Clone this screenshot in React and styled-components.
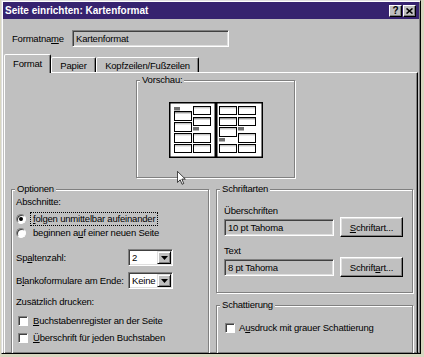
import React from 'react';
import styled, { createGlobalStyle } from 'styled-components';

const Global = createGlobalStyle`
	html, body {
		margin: 0;
		padding: 0;
		background: #d8d6c0;
	}
	body {
		font-family: "Liberation Sans", Arial, sans-serif;
		font-size: 9.5px;
		letter-spacing: -0.2px;
		color: #000;
	}
`;

const Window = styled.div`
	position: relative;
	box-sizing: border-box;
	width: 420px;
	height: 354px;
	margin-left: 1px;
	padding: 1px;
	display: flex;
	flex-direction: column;
	background: #c0c0c0;
	border: 1px solid;
	border-color: #dfdfdf #000 #000 #dfdfdf;
	box-shadow: inset 1px 1px 0 #fff, inset -1px -1px 0 #808080;
	overflow: hidden;
`;

const TitleBar = styled.div`
	flex-shrink: 0;
	height: 17px;
	display: flex;
	align-items: center;
	justify-content: space-between;
	padding: 0 3px 0 2px;
	background: #36236f;
`;

const TitleText = styled.span`
	color: #fff;
	font-weight: bold;
	font-size: 10px;
	letter-spacing: 0;
`;

const CaptionButtons = styled.div`
	display: flex;
	gap: 1px;
`;

const CaptionButton = styled.div`
	box-sizing: border-box;
	width: 13px;
	height: 12px;
	display: flex;
	align-items: center;
	justify-content: center;
	background: #c0c0c0;
	border: 1px solid;
	border-color: #fff #000 #000 #fff;
	box-shadow: inset -1px -1px 0 #808080;
	font-weight: bold;
	font-size: 10px;
	line-height: 1;
	letter-spacing: 0;
`;

const NameRow = styled.div`
	display: flex;
	align-items: center;
	margin-top: 11px;
	padding-left: 9px;
`;

const Label = styled.span`
	display: inline-block;
	width: ${(p) => p.$width || 'auto'};
	line-height: 12px;
	white-space: nowrap;
`;

const Field = styled.div`
	box-sizing: border-box;
	width: ${(p) => p.$width}px;
	height: ${(p) => p.$height || 17}px;
	padding-left: 3px;
	display: flex;
	align-items: center;
	background: ${(p) => (p.$white ? '#fff' : '#c0c0c0')};
	border: 1px solid;
	border-color: #808080 #fff #fff #808080;
	box-shadow: inset 1px 1px 0 #404040, inset -1px -1px 0 #dfdfdf;
	white-space: nowrap;
`;

const TabStrip = styled.div`
	display: flex;
	align-items: flex-end;
	height: 18px;
	margin-top: 7px;
	padding-left: 1px;
	flex-shrink: 0;
`;

const Tab = styled.div`
	position: relative;
	z-index: ${(p) => (p.$active ? 2 : 1)};
	box-sizing: border-box;
	width: ${(p) => p.$width}px;
	height: ${(p) => (p.$active ? 19 : 15)}px;
	margin-bottom: ${(p) => (p.$active ? -1 : 0)}px;
	display: flex;
	align-items: ${(p) => (p.$active ? 'flex-start' : 'center')};
	padding-top: ${(p) => (p.$active ? 3 : 0)}px;
	justify-content: center;
	background: #c0c0c0;
	border: 1px solid;
	border-bottom: none;
	border-color: #fff #000 transparent #fff;
	border-radius: 2px 2px 0 0;
	box-shadow: inset -1px 0 0 #808080;
	white-space: nowrap;
`;

const Panel = styled.div`
	flex-shrink: 0;
	height: 300px;
	margin: 0 1px;
	padding-top: 1px;
	box-sizing: border-box;
	border: 1px solid;
	border-color: #fff #000 #000 #fff;
	box-shadow: inset -1px -1px 0 #808080;
`;

const GroupBox = styled.fieldset`
	box-sizing: border-box;
	min-inline-size: 0;
	margin: ${(p) => p.$margin || '0'};
	padding: 0;
	width: ${(p) => p.$width}px;
	height: ${(p) => (p.$height ? `${p.$height}px` : 'auto')};
	border: 1px solid #808080;
	box-shadow: 1px 1px 0 #fff, inset 1px 1px 0 #fff;
`;

const Legend = styled.legend`
	margin-left: 3px;
	padding: 0 2px;
	line-height: 12px;
	background: #c0c0c0;
`;

const GroupBody = styled.div`
	display: flex;
	flex-direction: column;
	align-items: ${(p) => (p.$center ? 'center' : 'flex-start')};
	justify-content: ${(p) => (p.$center ? 'center' : 'flex-start')};
	padding: ${(p) => p.$padding};
	height: ${(p) => (p.$center ? '100%' : 'auto')};
	box-sizing: border-box;
`;

const Columns = styled.div`
	display: flex;
	align-items: flex-start;
	gap: 7px;
	margin: 5px 0 0 6px;
`;

const Stack = styled.div`
	display: flex;
	flex-direction: column;
`;

const Line = styled.div`
	line-height: 12px;
	margin-top: ${(p) => p.$top || 0}px;
	white-space: nowrap;
`;

const OptionRow = styled.div`
	display: flex;
	align-items: center;
	height: 14px;
	margin-top: ${(p) => p.$top || 0}px;
	padding-left: ${(p) => p.$indent || 0}px;
	gap: ${(p) => p.$gap || 4}px;
	white-space: nowrap;
`;

const Radio = styled.span`
	position: relative;
	box-sizing: border-box;
	width: 10px;
	height: 10px;
	border-radius: 50%;
	background: #fff;
	border: 1px solid;
	border-color: #808080 #fff #fff #808080;
	box-shadow: inset 1px 1px 0 #404040;
	&::after {
		content: '';
		display: ${(p) => (p.$checked ? 'block' : 'none')};
		position: absolute;
		left: 2px;
		top: 2px;
		width: 4px;
		height: 4px;
		border-radius: 50%;
		background: #000;
	}
`;

const Check = styled.span`
	box-sizing: border-box;
	width: 10px;
	height: 10px;
	flex-shrink: 0;
	background: #fff;
	border: 1px solid;
	border-color: #808080 #fff #fff #808080;
	box-shadow: inset 1px 1px 0 #404040;
`;

const OptionText = styled.span`
	padding: 0 2px;
	line-height: 12px;
	border: 1px dotted ${(p) => (p.$focus ? '#000' : 'transparent')};
`;

const ControlRow = styled.div`
	display: flex;
	align-items: center;
	gap: ${(p) => p.$gap || 0}px;
	height: ${(p) => p.$height}px;
	margin-top: ${(p) => p.$top || 0}px;
`;

const Combo = styled(Field)`
	justify-content: space-between;
	padding-right: 1px;
`;

const DropButton = styled.span`
	box-sizing: border-box;
	width: 14px;
	height: ${(p) => p.$height}px;
	display: flex;
	align-items: center;
	justify-content: center;
	background: #c0c0c0;
	border: 1px solid;
	border-color: #dfdfdf #000 #000 #dfdfdf;
	box-shadow: inset 1px 1px 0 #fff, inset -1px -1px 0 #808080;
`;

const PushButton = styled.div`
	box-sizing: border-box;
	width: 63px;
	height: 20px;
	display: flex;
	align-items: center;
	justify-content: center;
	background: #c0c0c0;
	border: 1px solid;
	border-color: #fff #000 #000 #fff;
	box-shadow: inset -1px -1px 0 #808080, inset 1px 1px 0 #dfdfdf;
	white-space: nowrap;
`;

const Cursor = styled.svg`
	position: absolute;
	left: 175px;
	top: 170px;
`;

const DownArrow = () => (
	<svg width="7" height="4" viewBox="0 0 7 4">
		<path d="M0 0h7L3.5 4z" fill="#000" />
	</svg>
);

const preview = [
	{ x: 5, items: [['tab', 5], ['box', 9, 9, true], ['box', 20, 9], ['box', 31, 9], ['box', 42, 8]] },
	{ x: 24, items: [['box', 4, 8], ['box', 15, 8, true], ['tab', 25], ['box', 31, 9], ['box', 42, 8]] },
	{ x: 50, items: [['box', 4, 8], ['box', 15, 8, true], ['box', 25, 9], ['tab', 36], ['box', 42, 8]] },
	{ x: 69, items: [['box', 4, 8], ['box', 15, 8, true], ['tab', 25], ['box', 31, 9], ['box', 42, 8]] },
];

const PreviewArt = () => (
	<svg width="94" height="56" viewBox="0 0 94 56">
		<rect x="0.75" y="0.75" width="45.5" height="54.5" fill="#fff" stroke="#000" strokeWidth="1.5" />
		<rect x="47.75" y="0.75" width="45.5" height="54.5" fill="#fff" stroke="#000" strokeWidth="1.5" />
		{preview.map((col) =>
			col.items.map(([kind, y, h, dark], i) =>
				kind === 'tab' ? (
					<rect key={col.x + '-' + i} x={col.x} y={y} width="6" height="3.5" fill="#6e6e6e" />
				) : (
					<g key={col.x + '-' + i}>
						<rect x={col.x + 0.5} y={y + 0.5} width="17" height={h} fill="#fff" stroke="#000" />
						<line x1={col.x + 1} x2={col.x + 17} y1={y + 1.75} y2={y + 1.75} stroke={dark ? '#8a8a8a' : '#bdbdbd'} strokeWidth="1.2" />
					</g>
				)
			)
		)}
	</svg>
);

export default function App() {
	return (
		<>
			<Global />
			<Window>
				<TitleBar>
					<TitleText>Seite einrichten: Kartenformat</TitleText>
					<CaptionButtons>
						<CaptionButton>?</CaptionButton>
						<CaptionButton>
							<svg width="7" height="6" viewBox="0 0 7 6">
								<path d="M0.5 0.5l6 5M6.5 0.5l-6 5" stroke="#000" strokeWidth="1.6" />
							</svg>
						</CaptionButton>
					</CaptionButtons>
				</TitleBar>

				<NameRow>
					<Label $width="60px">
						Formatna<u>m</u>e
					</Label>
					<Field $width={157}>Kartenformat</Field>
				</NameRow>

				<TabStrip>
					<Tab $active $width={47}>Format</Tab>
					<Tab $width={45}>Papier</Tab>
					<Tab $width={103}>Kopfzeilen/Fußzeilen</Tab>
				</TabStrip>

				<Panel>
					<GroupBox $width={159} $height={104} $margin="0 0 0 131px">
						<Legend>Vorschau:</Legend>
						<GroupBody $center $padding="0 0 4px 0">
							<PreviewArt />
						</GroupBody>
					</GroupBox>

					<Columns>
						<GroupBox $width={198} $height={190}>
							<Legend>Optionen</Legend>
							<GroupBody $padding="0 0 0 4px">
								<Line $top={1}>Abschnitte:</Line>
								<OptionRow $top={4}>
									<Radio $checked />
									<OptionText $focus>
										<u>f</u>olgen unmittelbar aufeinander
									</OptionText>
								</OptionRow>
								<OptionRow>
									<Radio />
									<OptionText>
										beginnen a<u>u</u>f einer neuen Seite
									</OptionText>
								</OptionRow>
								<ControlRow $height={17} $top={9}>
									<Label $width="112px">
										Sp<u>a</u>ltenzahl:
									</Label>
									<Combo $width={45} $white>
										2
										<DropButton $height={13}>
											<DownArrow />
										</DropButton>
									</Combo>
								</ControlRow>
								<ControlRow $height={17} $top={6}>
									<Label $width="112px">
										B<u>l</u>ankoformulare am Ende:
									</Label>
									<Combo $width={45} $white>
										Keine
										<DropButton $height={13}>
											<DownArrow />
										</DropButton>
									</Combo>
								</ControlRow>
								<Line $top={7}>Zusätzlich drucken:</Line>
								<OptionRow $top={6} $indent={2} $gap={2}>
									<Check />
									<OptionText>
										<u>B</u>uchstabenregister an der Seite
									</OptionText>
								</OptionRow>
								<OptionRow $top={3} $indent={2} $gap={2}>
									<Check />
									<OptionText>
										<u>Ü</u>berschrift für jeden Buchstaben
									</OptionText>
								</OptionRow>
							</GroupBody>
						</GroupBox>

						<Stack>
							<GroupBox $width={197}>
								<Legend>Schriftarten</Legend>
								<GroupBody $padding="0 0 15px 7px">
									<Line $top={10}>Überschriften</Line>
									<ControlRow $height={20} $gap={6}>
										<Field $width={110}>10 pt Tahoma</Field>
										<PushButton>
											<span>
												<u>S</u>chriftart...
											</span>
										</PushButton>
									</ControlRow>
									<Line $top={8}>Text</Line>
									<ControlRow $height={20} $gap={6}>
										<Field $width={110}>8 pt Tahoma</Field>
										<PushButton>
											<span>
												Schrift<u>a</u>rt...
											</span>
										</PushButton>
									</ControlRow>
								</GroupBody>
							</GroupBox>
							<GroupBox $width={197} $height={80} $margin="6px 0 0 0">
								<Legend>Schattierung</Legend>
								<GroupBody $padding="0 0 0 8px">
									<OptionRow $top={10} $gap={1}>
										<Check />
										<OptionText>
											A<u>u</u>sdruck mit grauer Schattierung
										</OptionText>
									</OptionRow>
								</GroupBody>
							</GroupBox>
						</Stack>
					</Columns>
				</Panel>

				<Cursor width="9" height="14" viewBox="0 0 12 19">
					<path d="M0.5 0.5V15.5L4.2 12L6.8 18L9 17L6.5 11H11.2Z" fill="#fff" stroke="#000" strokeWidth="1" />
				</Cursor>
			</Window>
		</>
	);
}
